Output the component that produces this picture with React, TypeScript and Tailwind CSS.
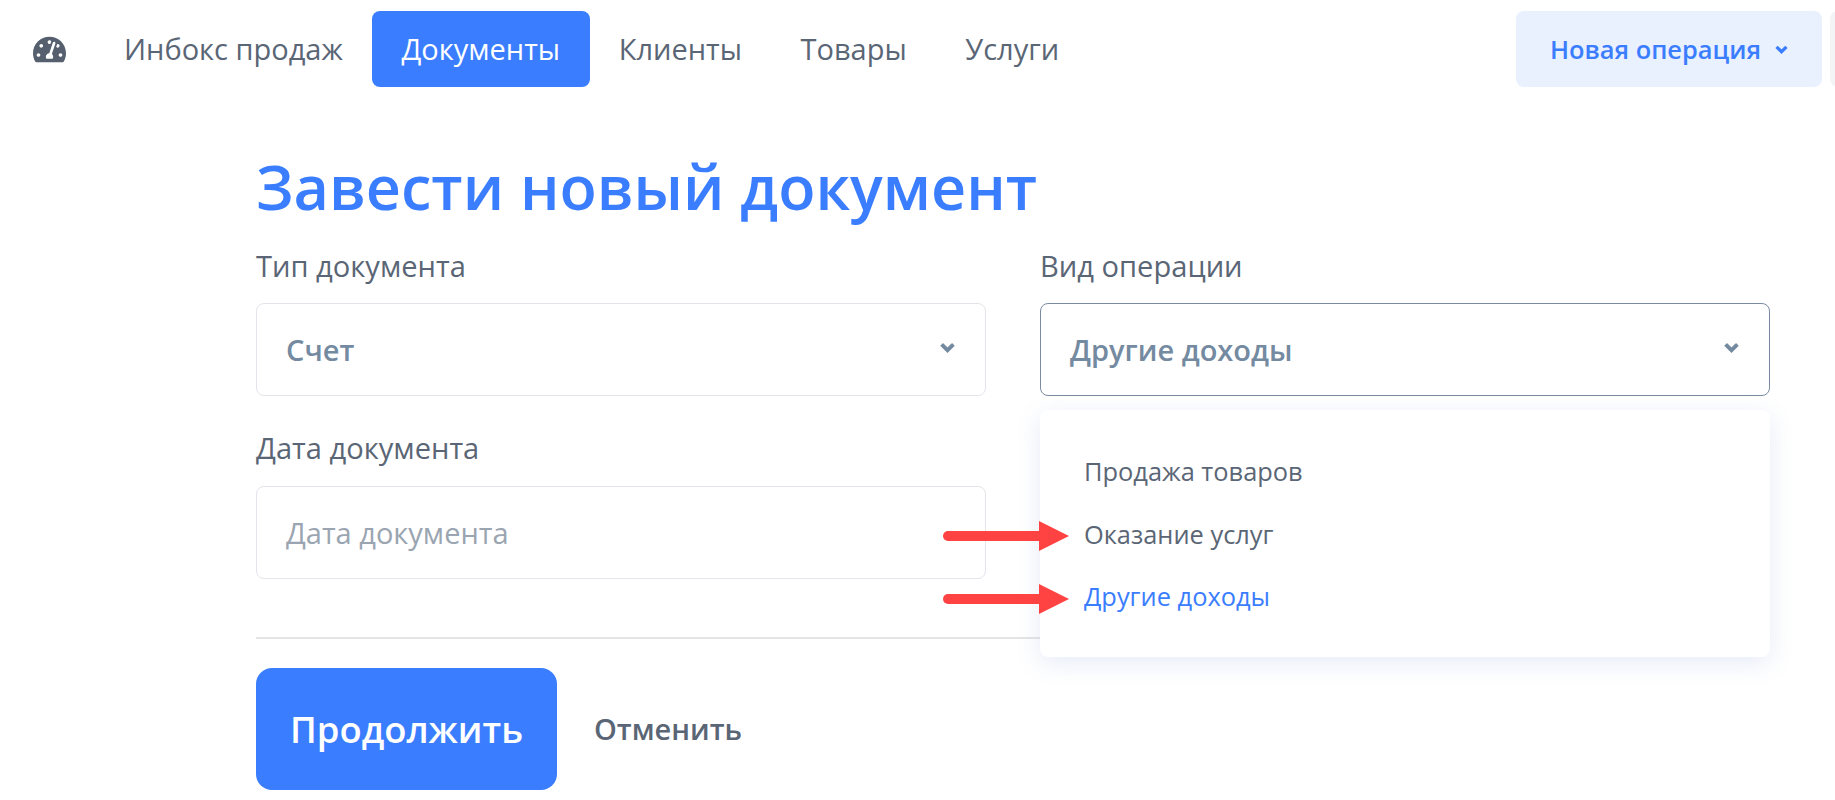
import { FaTachometerAlt } from "react-icons/fa";

const NAV_ITEMS = ["Клиенты", "Товары", "Услуги"];
const OPTIONS = ["Продажа товаров", "Оказание услуг", "Другие доходы"];

function Chevron({ className }: { className: string }) {
  return (
    <svg viewBox="0 0 14 10" className={className} fill="none" stroke="currentColor" strokeWidth="3.6">
      <path d="M1.5 2 L7 7.5 L12.5 2" />
    </svg>
  );
}

function Arrow() {
  return (
    <svg viewBox="0 0 131 30" className="w-[131px] h-[30px]">
      <line x1="10" y1="15" x2="102" y2="15" stroke="#ff4242" strokeWidth="10" strokeLinecap="round" />
      <polygon points="101,0 101,30 131,15" fill="#ff4242" />
    </svg>
  );
}

function SelectBox({ value, active }: { value: string; active?: boolean }) {
  return (
    <div
      className={`h-[93px] rounded-lg border bg-white flex items-center justify-between pl-[29px] pr-[30px] ${
        active ? "border-[#7a8ba3]" : "border-[#e2e5e9]"
      }`}
    >
      <span className="text-[29px] font-semibold text-[#748aa1]">{value}</span>
      <Chevron className="w-[15px] h-[11px] text-[#748aa1] -mt-[4px]" />
    </div>
  );
}

export default function App() {
  return (
    <div className="relative h-[800px] overflow-hidden bg-white font-['Open_Sans',sans-serif]">
      <nav className="flex items-center h-[98px] pl-[33px]">
        <FaTachometerAlt className="w-[33px] h-[33px] text-[#555f6e]" />
        <div className="flex items-center ml-[58px] text-[29px] text-[#5a6675] gap-[58.5px]">
          <span className="-mr-[29.5px]">Инбокс продаж</span>
          <span className="h-[76px] w-[218px] rounded-lg bg-[#3a7dff] text-white flex items-center justify-center -mr-[29.5px]">
            Документы
          </span>
          {NAV_ITEMS.map((item) => (
            <span key={item}>{item}</span>
          ))}
        </div>
        <div className="ml-auto flex items-center gap-[8px] -mr-[31px]">
          <div className="h-[76px] w-[306px] rounded-lg bg-[#e9f0fe] text-[#3a7dff] font-semibold text-[25.4px] flex items-center justify-center gap-[14px]">
            Новая операция
            <Chevron className="w-[13px] h-[9px]" />
          </div>
          <div className="h-[76px] w-[36px] rounded-lg bg-[#f3f4f6]" />
        </div>
      </nav>

      <main className="w-[1770px] pl-[256px]">
        <h1 className="text-[61.1px] leading-[80px] font-semibold text-[#3a7dff] mt-[49px]">
          Завести новый документ
        </h1>
        <div className="grid grid-cols-2 gap-x-[54px] mt-[21px]">
          <div>
            <div className="text-[29.1px] leading-[36px] text-[#5a6675] mb-[19px]">Тип документа</div>
            <SelectBox value="Счет" />
          </div>
          <div>
            <div className="text-[29.1px] leading-[36px] text-[#5a6675] mb-[19px]">Вид операции</div>
            <SelectBox value="Другие доходы" active />
          </div>
          <div className="mt-[34px]">
            <div className="text-[29.1px] leading-[36px] text-[#5a6675] mb-[20px]">Дата документа</div>
            <div className="h-[93px] rounded-lg border border-[#e2e5e9] flex items-center pl-[29px] text-[29px] text-[#9aa5b1]">
              Дата документа
            </div>
          </div>
        </div>
        <div className="h-[2px] bg-[#e5e5e5] mt-[58px]" />
        <div className="flex items-center mt-[29px]">
          <div className="w-[301px] h-[122px] rounded-2xl bg-[#3a7dff] text-white text-[36.4px] font-semibold flex items-center justify-center">
            Продолжить
          </div>
          <span className="ml-[37px] text-[29px] font-semibold text-[#5a6675]">Отменить</span>
        </div>
      </main>

      <div className="absolute left-[1040px] top-[410px] w-[730px] h-[247px] rounded-lg bg-white shadow-[0_6px_24px_rgba(90,120,200,0.15)] pt-[42px] pl-[44px] text-[25.4px] text-[#5a6675]">
        {OPTIONS.map((option, i) => (
          <div key={option} className={`h-[62.5px] leading-[38px] ${i === 2 ? "text-[#3a7dff]" : ""}`}>
            {option}
          </div>
        ))}
      </div>
      <div className="absolute left-[938px] top-[521px]"><Arrow /></div>
      <div className="absolute left-[938px] top-[584px]"><Arrow /></div>
    </div>
  );
}
